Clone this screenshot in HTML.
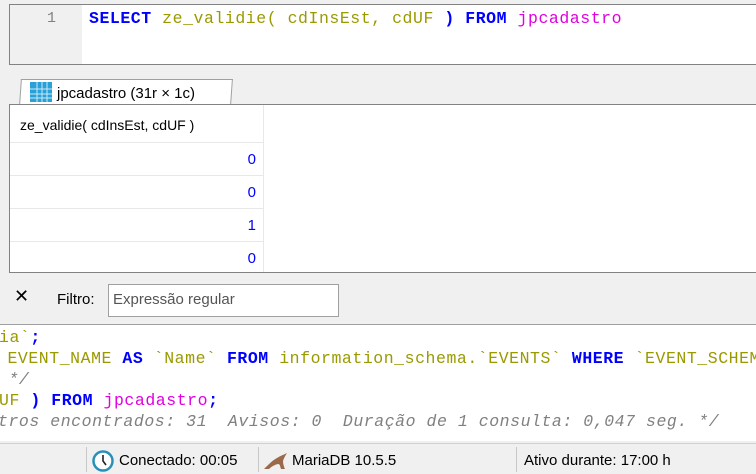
<!DOCTYPE html>
<html><head><meta charset="utf-8"><style>
*{margin:0;padding:0;box-sizing:border-box}
body{width:756px;height:474px;background:#f0f0f0;position:relative;overflow:hidden;font-family:"Liberation Sans",sans-serif;font-size:14px;color:#000}
.mono{font-family:"Liberation Mono",monospace;font-size:16.5px;white-space:pre;position:absolute;letter-spacing:0.55px}
.kw{color:#0000ff;font-weight:bold}.fn{color:#9a9a00}.tb{color:#e000e0}.cm{color:#808080;font-style:italic}
#ed{position:absolute;left:9px;top:4px;width:760px;height:61px;background:#fff;border:1px solid #828282}
#gut{position:absolute;left:0;top:0;width:72px;height:59px;background:#f0f0f0}
#tab{position:absolute;left:20px;top:79px;width:212px;height:26px;background:#fff;border:1px solid #a0a0a0;border-bottom:none;transform:skewX(-4deg)}
#grid{position:absolute;left:9px;top:104px;width:760px;height:169px;background:#fff;border:1px solid #828282}
.row{position:absolute;left:0;width:253px;border-top:1px solid #e8e8e8;height:33px}
.num{position:absolute;right:7px;color:#0000ff;font-size:15px}
#log{position:absolute;left:0;top:324px;width:756px;height:117px;background:#fff;border-top:1px solid #a0a0a0}
#sb{position:absolute;left:0;top:443px;width:756px;height:31px;background:#f0f0f0;border-top:1px solid #d0d0d0}
.sep{position:absolute;top:447px;width:1px;height:25px;background:#c8c8c8}
</style></head><body>
<div id="ed"><div id="gut"></div>
<div class="mono" style="left:37px;top:5px;color:#808080;font-size:15px">1</div>
<div class="mono" style="left:79px;top:4px"><span class="kw">SELECT</span> <span class="fn">ze_validie( cdInsEst, cdUF </span><span class="kw">)</span> <span class="kw">FROM</span> <span class="tb">jpcadastro</span></div>
</div>
<div style="position:absolute;left:9px;top:104px;width:760px;height:1px;background:#a0a0a0"></div>
<div id="tab"></div>
<svg style="position:absolute;left:30px;top:82px" width="22" height="20"><rect x="0" y="0" width="22" height="20" fill="#2aa0d8"/><g stroke="#c8eaf8" stroke-width="1"><line x1="7" y1="0" x2="7" y2="20"/><line x1="12" y1="0" x2="12" y2="20"/><line x1="17" y1="0" x2="17" y2="20"/><line x1="0" y1="7" x2="22" y2="7"/><line x1="0" y1="12" x2="22" y2="12"/><line x1="0" y1="16" x2="22" y2="16"/></g></svg>
<div style="position:absolute;left:57px;top:85px;font-size:15px">jpcadastro (31r × 1c)</div>
<div id="grid">
<div style="position:absolute;left:10px;top:12px;font-size:14px">ze_validie( cdInsEst, cdUF )</div>
<div style="position:absolute;left:253px;top:0;width:1px;height:167px;background:#e8e8e8"></div>
<div class="row" style="top:37px"><span class="num" style="top:8px">0</span></div>
<div class="row" style="top:70px"><span class="num" style="top:8px">0</span></div>
<div class="row" style="top:103px"><span class="num" style="top:8px">1</span></div>
<div class="row" style="top:136px"><span class="num" style="top:8px">0</span></div>
</div>
<div style="position:absolute;left:14px;top:286px;font-size:18px">✕</div>
<div style="position:absolute;left:57px;top:291px;font-size:15px">Filtro:</div>
<div style="position:absolute;left:108px;top:284px;width:231px;height:33px;background:#fff;border:1px solid #a0a0a0;padding:6px 4px;font-size:15px;color:#555">Expressão regular</div>
<div id="log">
<div class="mono" style="left:-1px;top:3px"><span class="fn">ia`</span><span class="kw">;</span></div>
<div class="mono" style="left:-3px;top:24px"><span class="fn"> EVENT_NAME </span><span class="kw">AS</span><span class="fn"> `Name` </span><span class="kw">FROM</span><span class="fn"> information_schema.`EVENTS` </span><span class="kw">WHERE</span><span class="fn"> `EVENT_SCHEMA`</span></div>
<div class="mono cm" style="left:-2px;top:45px"> */</div>
<div class="mono" style="left:-1px;top:66px"><span class="fn">UF </span><span class="kw">)</span> <span class="kw">FROM</span> <span class="tb">jpcadastro</span><span class="kw">;</span></div>
<div class="mono cm" style="left:-2px;top:87px">tros encontrados: 31  Avisos: 0  Duração de 1 consulta: 0,047 seg. */</div>
</div>
<div id="sb"></div>
<div class="sep" style="left:86px"></div><div class="sep" style="left:258px"></div><div class="sep" style="left:516px"></div>
<svg style="position:absolute;left:92px;top:450px" width="22" height="22"><circle cx="11" cy="11" r="9.5" fill="#fff" stroke="#2a90b8" stroke-width="2.5"/><path d="M11 5V11L14 15" stroke="#222" stroke-width="1.6" fill="none"/></svg>
<div style="position:absolute;left:119px;top:452px;font-size:15px">Conectado: 00:05</div>
<svg style="position:absolute;left:263px;top:452px" width="26" height="18"><path d="M1 17C6 12 10 8 14 6C17 4 20 3 24 1C22 4 21 6 20 9C20 12 21 15 22 17L18 17C17 14 17 12 15 12C11 13 8 15 6 17Z" fill="#9a6a4a"/></svg>
<div style="position:absolute;left:292px;top:452px;font-size:15px">MariaDB 10.5.5</div>
<div style="position:absolute;left:524px;top:452px;font-size:15px">Ativo durante: 17:00 h</div>
</body></html>
